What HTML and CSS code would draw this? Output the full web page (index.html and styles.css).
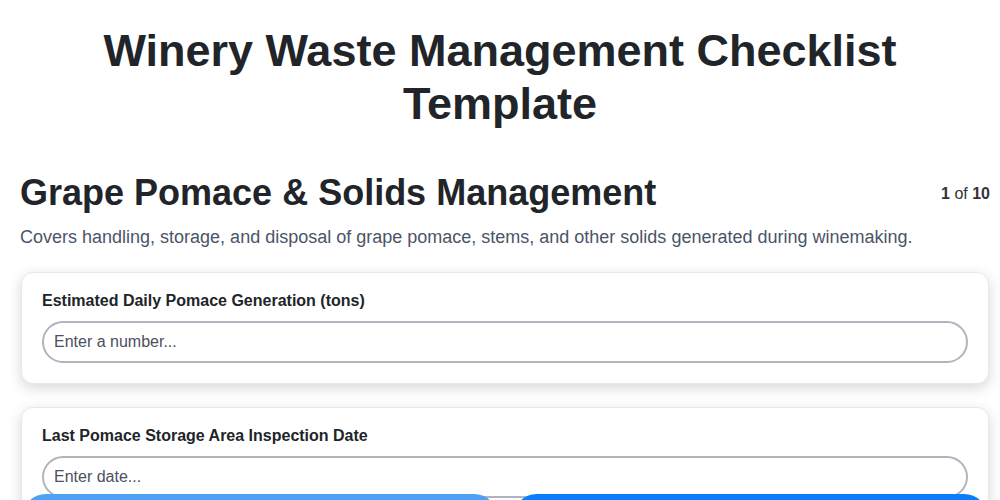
FILE: index.html
```html
<!DOCTYPE html>
<html lang="en">
<head>
    <meta charset="UTF-8">
    <meta name="viewport" content="width=device-width, initial-scale=1.0">
    <title>Winery Waste Management Checklist Template</title>
    <link rel="stylesheet" href="styles.css">
</head>
<body>
    <div class="container">

        <h1>Winery Waste Management Checklist Template</h1>

        <div class="section-head">
            <h2>Grape Pomace &amp; Solids Management</h2>
            <span class="step"><b>1</b> of <b>10</b></span>
        </div>
        <p class="desc">Covers handling, storage, and disposal of grape pomace, stems, and other solids generated during winemaking.</p>

        <div class="card first">
            <label for="pomace">Estimated Daily Pomace Generation (tons)</label>
            <input id="pomace" type="text" placeholder="Enter a number...">
        </div>

        <div class="card">
            <label for="inspect">Last Pomace Storage Area Inspection Date</label>
            <input id="inspect" type="text" placeholder="Enter date...">
        </div>

        <div class="card">
            <label for="notes">Notes</label>
            <input id="notes" type="text" placeholder="Enter text...">
        </div>
    </div>

    <div class="nav">
        <button class="prev">Previous</button>
        <button class="next">Next</button>
    </div>
</body>
</html>
```

FILE: styles.css
```css
*{
    margin: 0px;
    padding: 0px;
    box-sizing: border-box;
}

body{
    font-family: "Liberation Sans", Arial, sans-serif;
    color: #212529;
    background-color: white;
}

.container{
    padding: 24px 10px 80px 20px;
}

.container h1{
    font-size: 45px;
    line-height: 53px;
    text-align: center;
    margin: 0 70px 0 60px;
}

.section-head{
    display: flex;
    justify-content: space-between;
    align-items: flex-start;
    margin-top: 41px;
}

.section-head h2{
    font-size: 36px;
    line-height: 44px;
}

.section-head .step{
    font-size: 16px;
    line-height: 18px;
    color: #333;
    margin-top: 14px;
}

.desc{
    font-size: 18px;
    line-height: 21px;
    color: #4a5568;
    margin-top: 12px;
}

.card{
    background-color: white;
    border: 1px solid #e8e8ec;
    border-radius: 12px;
    box-shadow: 0px 4px 14px rgba(0, 0, 0, 0.16);
    padding: 19px 20px 20px 20px;
    margin: 23px 1px 0px 1px;
}

.card.first{
    margin-top: 24px;
}

.card label{
    display: block;
    font-size: 16px;
    line-height: 18px;
    font-weight: bold;
    margin-bottom: 11px;
}

.card input{
    width: 100%;
    height: 42px;
    border: 2px solid #aeb5bd;
    border-radius: 21px;
    padding: 0 10px;
    font-size: 16px;
    font-family: inherit;
    color: #333;
    outline: none;
}

.card input::placeholder{
    color: #4a5060;
}

.nav{
    position: fixed;
    left: 22px;
    right: 12px;
    bottom: -42px;
    display: flex;
    gap: 15px;
}

.nav button{
    flex: 1;
    height: 48px;
    border: none;
    border-radius: 24px;
    color: white;
    font-size: 16px;
    font-weight: bold;
}

.nav .prev{
    background-color: #4da2f7;
}

.nav .next{
    background-color: #0a7dfc;
}
```
